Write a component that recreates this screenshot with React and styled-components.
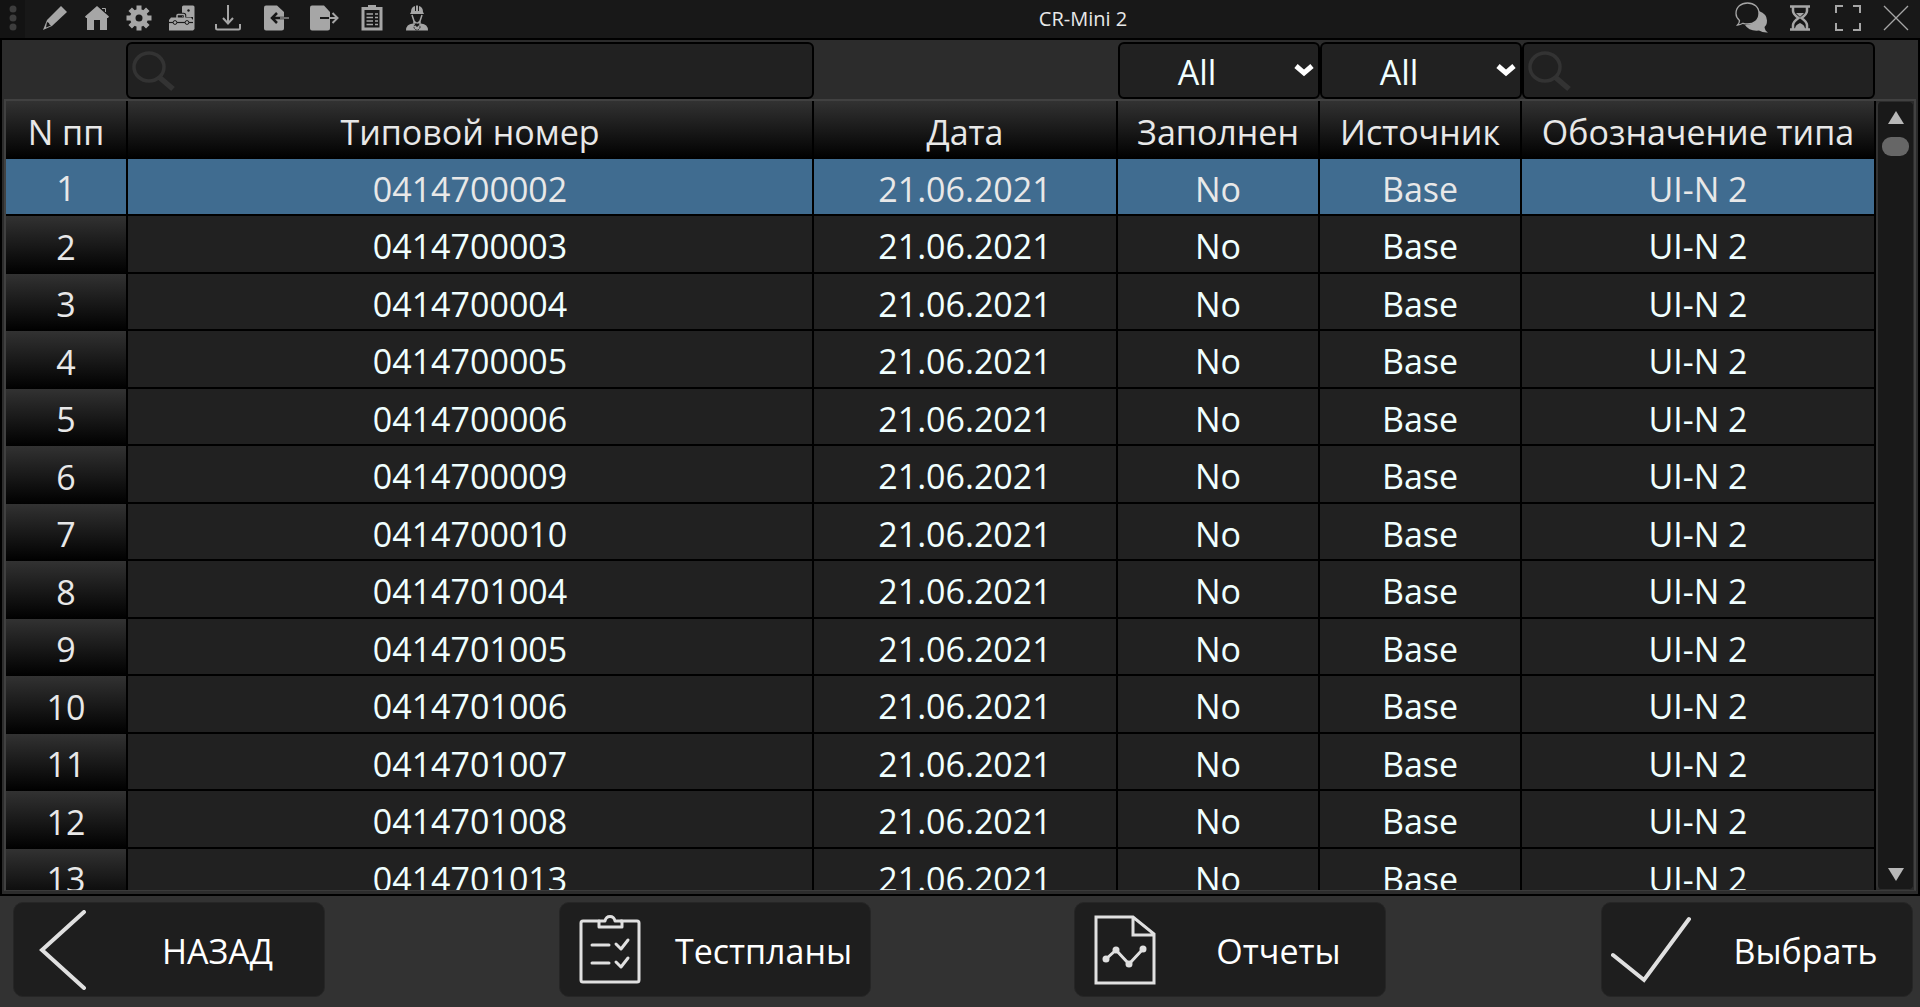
import React from 'react';
import styled, { createGlobalStyle } from 'styled-components';

const GlobalStyle = createGlobalStyle`
  * {
    box-sizing: border-box;
  }

  body {
    margin: 0;
    background: #323232;
    font-family: 'Open Sans', 'Noto Sans', sans-serif;
    color: #e8e8e8;
  }

  button, input, select {
    font: inherit;
    color: inherit;
  }
`;

const Window = styled.div`
  height: 100vh;
  display: flex;
  flex-direction: column;
  overflow: hidden;
`;

const TitleBar = styled.header`
  height: 38px;
  flex: none;
  display: flex;
  align-items: flex-start;
  background: #181818;
`;

const Tools = styled.div`
  display: flex;
  align-items: flex-start;
`;

const Grip = styled.div`
  width: 25px;
  height: 38px;
  margin-right: 9px;
  display: flex;
  align-items: center;
  justify-content: center;
  background: #131313;
`;

const Title = styled.h1`
  flex: 1;
  margin: 0;
  font-size: 20px;
  font-weight: 400;
  line-height: 38px;
  text-align: center;
`;

const ToolButton = styled.button`
  width: ${props => props.width || 48}px;
  height: 36px;
  padding: 0;
  border: 0;
  display: flex;
  align-items: center;
  justify-content: center;
  background: none;
  color: #a6a6a6;
`;

const Panel = styled.main`
  flex: 1;
  min-height: 0;
  display: flex;
  flex-direction: column;
  padding: 1px 2px 3px;
  border: 2px solid #000;
  background: #2c2c2c;
`;

const Filters = styled.div`
  flex: none;
  display: grid;
  grid-template-columns: 122px minmax(0, 1fr) 304px 202px 202px 353px 41px;
  padding-top: 1px;
`;

const Field = styled.label`
  grid-column: ${props => props.column};
  height: 57px;
  display: flex;
  align-items: center;
  padding-right: 4px;
  border: 2px solid #000;
  border-radius: 6px;
  background: #212121;
  color: #333;
`;

const SearchInput = styled.input`
  flex: 1;
  min-width: 0;
  height: 100%;
  border: 0;
  outline: 0;
  background: none;
  font-size: 34px;
  color: #f0ffff;
`;

const FilterSelect = styled.select`
  flex: 1;
  min-width: 0;
  height: 53px;
  margin-right: -34px;
  padding: 2px 54px 0 0;
  border: 0;
  outline: 0;
  appearance: none;
  background: none;
  font-size: 34px;
  text-align: center;
  text-align-last: center;
  color: #f0ffff;
`;

const Frame = styled.div`
  flex: 1;
  min-height: 0;
  display: flex;
  border: 2px solid #414141;
  border-bottom: 1px solid #3a3a3a;
`;

const TableView = styled.div`
  flex: 1;
  min-width: 0;
  overflow: hidden;
`;

const Table = styled.table`
  width: 100%;
  table-layout: fixed;
  border-collapse: separate;
  border-spacing: 0;
  font-size: 34px;
  line-height: 46px;
`;

const Col = styled.col`
  width: ${props => props.width};
`;

const HeadCell = styled.th`
  height: ${props => props.height || 'auto'};
  padding: 3px 0 0;
  border-right: 2px solid #000;
  font-weight: 400;
  text-align: center;
  white-space: nowrap;
  background: linear-gradient(#323232, #000);
`;

const Cell = styled.td`
  padding: 4px 0 0;
  border-right: 2px solid #000;
  border-bottom: 2px solid #000;
  text-align: center;
  background: #212121;
  color: #f0ffff;
`;

const Row = styled.tr`
  height: 57px;

  &:nth-child(even) {
    height: 58px;
  }

  &[aria-selected='true'] > * {
    border-bottom: 2px solid #000;
    background: #406c90;
    color: #e8e8e8;
  }
`;

const Scrollbar = styled.div`
  flex: none;
  width: 38px;
  display: flex;
  flex-direction: column;
  align-items: center;
  border: 1px solid #2c2c2c;
  border-left: 2px solid #333;
  border-radius: 5px;
  background: #191919;
`;

const ScrollButton = styled.button`
  width: 100%;
  height: 30px;
  padding: 0;
  border: 0;
  display: flex;
  align-items: center;
  justify-content: center;
  background: none;
  color: #b8b8b8;
`;

const Thumb = styled.div`
  width: 27px;
  height: 19px;
  margin: 5px 0 auto;
  border-radius: 9px;
  background: #666;
`;

const Footer = styled.footer`
  flex: none;
  height: 111px;
  display: grid;
  grid-template-columns: 546fr 515fr 527fr 312px;
  align-items: start;
  padding: 6px 7px 0 13px;
  background: #323232;
`;

const ActionButton = styled.button`
  width: 312px;
  height: 95px;
  padding: 0 10px 0 9px;
  border: 1px solid #262626;
  border-radius: 10px;
  display: flex;
  align-items: center;
  background: #1e1e1e;
  color: #fff;
  font-size: 34px;
`;

const ActionLabel = styled.span`
  flex: 1;
  padding: 3px 0 0 8px;
  text-align: center;
`;

const headers = ['N пп', 'Типовой номер', 'Дата', 'Заполнен', 'Источник', 'Обозначение типа'];

const numbers = [
  '0414700002', '0414700003', '0414700004', '0414700005', '0414700006',
  '0414700009', '0414700010', '0414701004', '0414701005', '0414701006',
  '0414701007', '0414701008', '0414701013'
];

const SearchIcon = () => (
  <svg width="48" height="44" viewBox="0 0 48 44" fill="none" stroke="currentColor">
    <ellipse cx="21" cy="18" rx="15" ry="14" strokeWidth="3.5" />
    <path d="M31 28 45 40" strokeWidth="5.5" />
  </svg>
);

const ChevronIcon = () => (
  <svg width="20" height="14" viewBox="0 0 20 14" fill="none" stroke="#fff" strokeWidth="5">
    <path d="M2 2 10 9 18 2" />
  </svg>
);

const GripIcon = () => (
  <svg width="8" height="28" viewBox="0 0 8 28" fill="#3d3d3d">
    <circle cx="4" cy="4" r="3.5" />
    <circle cx="4" cy="13" r="3.5" />
    <circle cx="4" cy="22" r="3.5" />
  </svg>
);

const PencilIcon = () => (
  <svg width="26" height="26" viewBox="0 0 26 26" fill="currentColor">
    <path d="M19 1 25 7 10 21 1 25 5 15Z" />
    <path d="M5 17 7 18 7.5 19.5 9 20.5 4 22.5Z" fill="#181818" />
  </svg>
);

const HomeIcon = () => (
  <svg width="26" height="26" viewBox="0 0 26 26" fill="currentColor">
    <path d="M13 1 25 11.5 24 13H23V25H16V15H10V25H3V13H2L1 11.5Z" />
    <path d="M18 3.5H21.5V7" fill="none" stroke="currentColor" />
  </svg>
);

const GearIcon = () => (
  <svg width="26" height="26" viewBox="0 0 26 26">
    <g stroke="currentColor" strokeWidth="5">
      <path d="M13 .5V25.5M.5 13H25.5M4.2 4.2 21.8 21.8M21.8 4.2 4.2 21.8" />
    </g>
    <circle cx="13" cy="13" r="9" fill="currentColor" />
    <circle cx="13" cy="13" r="3.5" fill="#181818" />
  </svg>
);

const ToolboxIcon = () => (
  <svg width="26" height="26" viewBox="0 0 26 26" fill="currentColor">
    <path d="M13 12V2Q13 .5 14.5 .5H24Q25.5 .5 25.5 2V24L24 25.5V12Z" />
    <circle cx="19.5" cy="5.5" r="1.2" fill="#181818" />
    <path d="M8 13V10.5Q8 9.5 9 9.5H14.5Q15.5 9.5 15.5 10.5V13" fill="none" stroke="#181818" strokeWidth="3.5" />
    <path d="M8 13V10.5Q8 9.5 9 9.5H14.5Q15.5 9.5 15.5 10.5V13" fill="none" stroke="currentColor" strokeWidth="1.5" />
    <path d="M2 12.5H22L24 15V25.5H0V15Z" />
    <path d="M0 17.5H24" stroke="#181818" strokeWidth="1.2" />
    <g fill="currentColor" stroke="#181818">
      <circle cx="6" cy="17.5" r="1.9" />
      <circle cx="18" cy="17.5" r="1.9" />
    </g>
  </svg>
);

const DownloadIcon = () => (
  <svg width="26" height="26" viewBox="0 0 26 26" fill="none" stroke="currentColor" strokeWidth="2">
    <path d="M13 0V18M8 13 13 18.5 18 13M1 19V23Q1 24.5 2.5 24.5H23.5Q25 24.5 25 23V19" />
  </svg>
);

const ImportIcon = () => (
  <svg width="26" height="26" viewBox="0 0 26 26" fill="none">
    <path d="M3 .5H14L21 7V23Q21 25.5 18.5 25.5H3Q1 25.5 1 23.5V2.5Q1 .5 3 .5Z" fill="currentColor" />
    <path d="M21 13H9M14 8 9 13 14 18" stroke="#181818" strokeWidth="2.5" />
    <path d="M17 13H26" stroke="currentColor" strokeWidth="1.2" />
  </svg>
);

const ExportIcon = () => (
  <svg width="30" height="26" viewBox="0 0 30 26" fill="none">
    <path d="M3 .5H15L21 7V23Q21 25.5 18.5 25.5H3Q1 25.5 1 23.5V2.5Q1 .5 3 .5Z" fill="currentColor" />
    <path d="M11 13H21" stroke="#181818" strokeWidth="2" />
    <path d="M20 13H28M23.5 8 28.5 13 23.5 18" stroke="currentColor" strokeWidth="2" />
  </svg>
);

const ClipboardIcon = () => (
  <svg width="22" height="26" viewBox="0 0 22 26" fill="none" stroke="currentColor">
    <path d="M2 3.5H20V24H2Z" strokeWidth="3" />
    <path d="M7 0H15V5H7Z" fill="currentColor" stroke="none" />
    <path d="M5.5 9H12M5.5 12.5H12M5.5 16H12M5.5 19.5H12M14 9H17M14 12.5H17M14 16H17M14 19.5H17" strokeWidth="1.5" />
  </svg>
);

const WorkerIcon = () => (
  <svg width="22" height="26" viewBox="0 0 22 26" fill="currentColor">
    <path d="M5 7Q5 2 9 1V6H10V.5H12V6H13V1Q17 2 17 7L18 9H4Z" />
    <path d="M6 10 8 16 10 18H12L14 16 16 10M8 16V20M14 16V20" fill="none" stroke="currentColor" strokeWidth="1.5" />
    <path d="M0 25.5Q0 19 7 18.5L11 22 15 18.5Q22 19 22 25.5Z" />
    <circle cx="11" cy="22" r="3" fill="none" stroke="#181818" strokeDasharray="1.5 1" />
  </svg>
);

const ChatIcon = () => (
  <svg width="34" height="32" viewBox="0 0 34 32" fill="currentColor">
    <path d="M24 9Q32 12 32 18.5 32 23 29.5 25 30 29 33 30.5 28 31 24 28.5 14 29.5 10 23 22 23 24 9Z" />
    <path d="M2.500 23Q4.500 21 4.500 18.500 1 15.500 1 11.500C1 5 6 1 12.500 1S24 5 24 11.500 19 22 12.500 22Q10 22 8 21.300 5 23 2.500 23Z" fill="#181818" stroke="currentColor" strokeWidth="1.3" />
  </svg>
);

const HourglassIcon = () => (
  <svg width="20" height="26" viewBox="0 0 20 26" fill="none" stroke="currentColor">
    <path d="M0 1.5H20M0 24.5H20" strokeWidth="2.5" />
    <path d="M3 2V6Q3 9 8.5 13 3 17 3 20V24M17 2V6Q17 9 11.5 13 17 17 17 20V24" strokeWidth="2.5" />
    <path d="M6 8H14L10 12ZM5 24Q5 20 10 18 15 20 15 24Z" fill="currentColor" stroke="none" />
  </svg>
);

const FullscreenIcon = () => (
  <svg width="26" height="26" viewBox="0 0 26 26" fill="none" stroke="currentColor" strokeWidth="2">
    <path d="M1 8V1H8M18 1H25V8M25 18V25H18M8 25H1V18" />
  </svg>
);

const CloseIcon = () => (
  <svg width="26" height="26" viewBox="0 0 26 26" stroke="currentColor" strokeWidth="1.3">
    <path d="M1 1 25 25M25 1 1 25" />
  </svg>
);

const BackIcon = () => (
  <svg width="90" height="80" viewBox="0 0 90 80" fill="none" stroke="#e0e0e0" strokeWidth="4" strokeLinecap="round">
    <path d="M61 2 19 40 61 78" />
  </svg>
);

const PlansIcon = () => (
  <svg width="90" height="80" viewBox="0 0 90 80" fill="none" stroke="#e0e0e0" strokeWidth="3" strokeLinejoin="round" strokeLinecap="round">
    <path d="M30 11H14Q12 11 12 13V70Q12 72 14 72H68Q70 72 70 70V13Q70 11 68 11H52" />
    <path d="M30 11V17H53V11H46Q45 6.5 41 6.5T36 11Z" />
    <path d="M23 35H40M23 53H40M47 34 52 39 59 30M47 52 52 57 59 48" />
  </svg>
);

const ReportsIcon = () => (
  <svg width="90" height="80" viewBox="0 0 90 80" fill="none" stroke="#e0e0e0" strokeWidth="3">
    <path d="M12 7H49L70 24V73H12ZM49 7V25H70" />
    <path d="M22 49 32 40 45 54 59 39" />
    <g fill="#e0e0e0" stroke="none">
      <circle cx="22" cy="49" r="3.5" />
      <circle cx="32" cy="40" r="3.5" />
      <circle cx="45" cy="54" r="3.5" />
      <circle cx="59" cy="39" r="3.5" />
    </g>
  </svg>
);

const CheckIcon = () => (
  <svg width="90" height="80" viewBox="0 0 90 80" fill="none" stroke="#e0e0e0" strokeWidth="4" strokeLinecap="round">
    <path d="M2 45 33 70 78 9" />
  </svg>
);

const tools = [
  ['Edit', PencilIcon, 42], ['Home', HomeIcon, 42], ['Settings', GearIcon, 42],
  ['Toolbox', ToolboxIcon, 44], ['Download', DownloadIcon], ['Import', ImportIcon],
  ['Export', ExportIcon], ['Plan', ClipboardIcon], ['Operator', WorkerIcon, 42]
];

const windowTools = [
  ['Chat', ChatIcon], ['Wait', HourglassIcon],
  ['Full screen', FullscreenIcon], ['Close', CloseIcon]
];

const actions = [
  ['НАЗАД', BackIcon], ['Тестпланы', PlansIcon],
  ['Отчеты', ReportsIcon], ['Выбрать', CheckIcon]
];

function App() {
  return (
    <>
      <GlobalStyle />
      <Window>
        <TitleBar>
          <Tools>
            <Grip><GripIcon /></Grip>
            {tools.map(([name, Icon, width]) => (
              <ToolButton key={name} width={width} aria-label={name}><Icon /></ToolButton>
            ))}
          </Tools>
          <Title>CR-Mini 2</Title>
          <Tools>
            {windowTools.map(([name, Icon]) => (
              <ToolButton key={name} aria-label={name}><Icon /></ToolButton>
            ))}
          </Tools>
        </TitleBar>

        <Panel>
          <Filters>
            <Field column={2}>
              <SearchIcon />
              <SearchInput aria-label="Типовой номер" />
            </Field>
            <Field column={4}>
              <FilterSelect aria-label="Заполнен"><option>All</option></FilterSelect>
              <ChevronIcon />
            </Field>
            <Field column={5}>
              <FilterSelect aria-label="Источник"><option>All</option></FilterSelect>
              <ChevronIcon />
            </Field>
            <Field column={6}>
              <SearchIcon />
              <SearchInput aria-label="Обозначение типа" />
            </Field>
          </Filters>

          <Frame>
            <TableView>
              <Table>
                <colgroup>
                  <Col width="122px" />
                  <Col />
                  <Col width="304px" />
                  <Col width="202px" />
                  <Col width="202px" />
                  <Col width="354px" />
                </colgroup>
                <thead>
                  <tr>
                    {headers.map(header => (
                      <HeadCell key={header} height="58px" scope="col">{header}</HeadCell>
                    ))}
                  </tr>
                </thead>
                <tbody>
                  {numbers.map((number, i) => (
                    <Row key={number} aria-selected={i === 0}>
                      <HeadCell scope="row">{i + 1}</HeadCell>
                      <Cell>{number}</Cell>
                      <Cell>21.06.2021</Cell>
                      <Cell>No</Cell>
                      <Cell>Base</Cell>
                      <Cell>UI-N 2</Cell>
                    </Row>
                  ))}
                </tbody>
              </Table>
            </TableView>
            <Scrollbar>
              <ScrollButton aria-label="Up">
                <svg width="16" height="13" viewBox="0 0 16 13" fill="currentColor"><path d="M8 0 16 13H0Z" /></svg>
              </ScrollButton>
              <Thumb />
              <ScrollButton aria-label="Down">
                <svg width="16" height="13" viewBox="0 0 16 13" fill="currentColor"><path d="M0 0H16L8 13Z" /></svg>
              </ScrollButton>
            </Scrollbar>
          </Frame>
        </Panel>

        <Footer>
          {actions.map(([label, Icon]) => (
            <ActionButton key={label}>
              <Icon />
              <ActionLabel>{label}</ActionLabel>
            </ActionButton>
          ))}
        </Footer>
      </Window>
    </>
  );
}

export default App;
